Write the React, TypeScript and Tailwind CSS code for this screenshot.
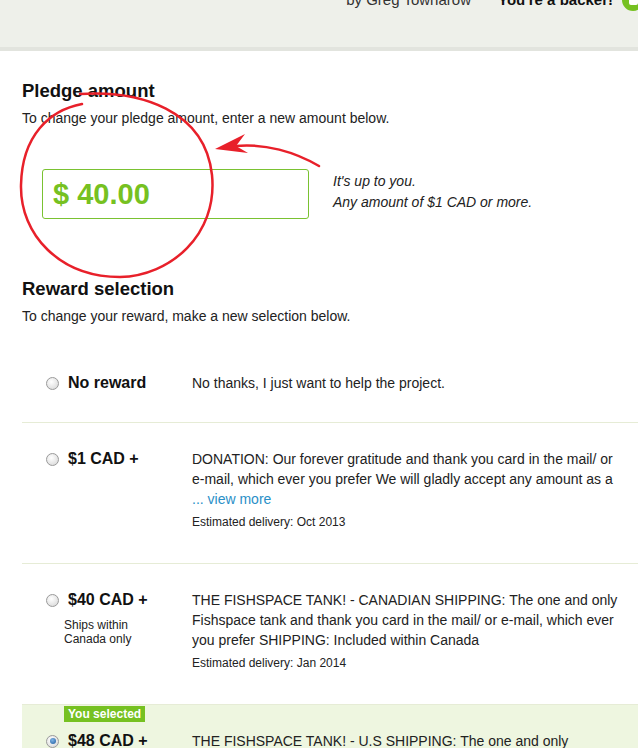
import React from "react";

interface Reward {
  title: string;
  note?: string[];
  desc: string;
  more?: boolean;
  delivery?: string;
  selected?: boolean;
}

const rewards: Reward[] = [
  {
    title: "$1 CAD +",
    desc: "DONATION: Our forever gratitude and thank you card in the mail/ or e-mail, which ever you prefer We will gladly accept any amount as a",
    more: true,
    delivery: "Oct 2013",
  },
  {
    title: "$40 CAD +",
    note: ["Ships within", "Canada only"],
    desc: "THE FISHSPACE TANK! - CANADIAN SHIPPING: The one and only Fishspace tank and thank you card in the mail/ or e-mail, which ever you prefer SHIPPING: Included within Canada",
    delivery: "Jan 2014",
  },
  {
    title: "$48 CAD +",
    desc: "THE FISHSPACE TANK! - U.S SHIPPING: The one and only Fishspace tank and thank you card in the mail/ or e-mail, which ever you prefer SHIPPING: Included within the U.S.",
    delivery: "Jan 2014",
    selected: true,
  },
];

function Radio({ checked }: { checked?: boolean }) {
  return (
    <span className="w-[13px] h-[13px] shrink-0 rounded-full border border-[#9a9a9a] bg-[radial-gradient(circle_at_40%_35%,#ffffff,#d4d4d4)] flex items-center justify-center">
      {checked && <span className="w-[6px] h-[6px] rounded-full bg-[radial-gradient(circle_at_40%_35%,#7fb4e6,#1d5a9c)]" />}
    </span>
  );
}

function RewardRow({ r }: { r: Reward }) {
  return (
    <div className={`border-t border-[#e6ecd6] ${r.selected ? "bg-[#eef6e0]" : ""}`}>
      {r.selected && (
        <div className="flex pl-[42px] pt-[1px]">
          <span className="bg-[#76c121] text-white text-[12px] font-bold leading-[16px] px-[4px]">
            You selected
          </span>
        </div>
      )}
      <div className={`flex ${r.selected ? "pt-[9px]" : "pt-[26px]"} pb-[34px]`}>
        <div className="w-[170px] shrink-0 pl-[24px]">
          <div className="flex items-center gap-[9px] h-[20px]">
            <Radio checked={r.selected} />
            <span className="text-[16px] font-bold text-[#111]">{r.title}</span>
          </div>
          {r.note && (
            <div className="pl-[18px] pt-[8px] text-[12px] leading-[14px] text-[#222]">
              {r.note.map((n) => (
                <div key={n}>{n}</div>
              ))}
            </div>
          )}
        </div>
        <div className="w-[432px] shrink-0 text-[14px] leading-[20px] text-[#222]">
          <p>{r.desc}</p>
          {r.more && (
            <p>
              <span className="text-[#2a8fc7]">... view more</span>
            </p>
          )}
          {r.delivery && (
            <p className="text-[12px] leading-[14px] mt-[6px]">Estimated delivery: {r.delivery}</p>
          )}
        </div>
      </div>
    </div>
  );
}

export default function App() {
  return (
    <div className="relative w-[638px] h-[748px] overflow-hidden bg-white font-['Liberation_Sans',Arial,sans-serif] text-[#222]">
      {/* Header strip */}
      <div className="h-[51px] bg-[#eef0ea] border-b-4 border-[#e2e4de]">
        <div className="relative -top-[11px] flex items-center justify-end gap-[27px] text-[15px] leading-[18px]">
          <span className="text-[#333]">by Greg Townarow</span>
          <span className="flex items-center gap-[9px]">
            <span className="font-bold text-[#111]">You're a backer!</span>
            <span className="w-[22px] h-[22px] rounded-full bg-[#76c121] flex items-center justify-center -mr-[6px]">
              <span className="w-[9px] h-[9px] bg-white rounded-[2px]" />
            </span>
          </span>
        </div>
      </div>

      <div className="pl-[22px]">
        <h2 className="mt-[30px] text-[18.5px] leading-[20px] font-bold text-[#111]">Pledge amount</h2>
        <p className="mt-[8px] text-[14px] leading-[18px]">To change your pledge amount, enter a new amount below.</p>

        <div className="mt-[42px] flex items-start">
          <div className="ml-[20px] w-[267px] h-[50px] border border-[#7ac231] rounded-[3px] flex items-center pl-[10px]">
            <span className="text-[29px] font-bold text-[#76c121] leading-none">$ 40.00</span>
          </div>
          <div className="ml-[24px] mt-[2px] text-[14px] leading-[21px] italic text-[#222]">
            <p>It's up to you.</p>
            <p>Any amount of $1 CAD or more.</p>
          </div>
        </div>

        <h2 className="mt-[60px] text-[18.5px] leading-[20px] font-bold text-[#111]">Reward selection</h2>
        <p className="mt-[8px] text-[14px] leading-[18px]">To change your reward, make a new selection below.</p>

        <div>
          <div className="flex items-center pt-[48px] pb-[29px]">
            <div className="w-[170px] shrink-0 pl-[24px] flex items-center gap-[9px] h-[20px]">
              <Radio />
              <span className="text-[16px] font-bold text-[#111]">No reward</span>
            </div>
            <span className="text-[14px] leading-[20px]">No thanks, I just want to help the project.</span>
          </div>
          {rewards.map((r) => (
            <RewardRow key={r.title} r={r} />
          ))}
        </div>
      </div>

      {/* red annotation */}
      <svg className="absolute left-0 top-0 pointer-events-none" width="638" height="748">
        <g fill="none" stroke="#e8202a" strokeWidth="2.5" strokeLinecap="round">
          <path d="M80 94 C 140 90, 205 110, 212 175 C 218 235, 170 276, 120 277 C 60 277, 20 235, 21 185 C 22 135, 50 110, 82 104" />
          <path d="M319 166 C 295 152, 265 143, 235 146" />
        </g>
        <path d="M215 149 L 245 134 L 236 146 L 248 153 Z" fill="#e8202a" />
      </svg>
    </div>
  );
}
